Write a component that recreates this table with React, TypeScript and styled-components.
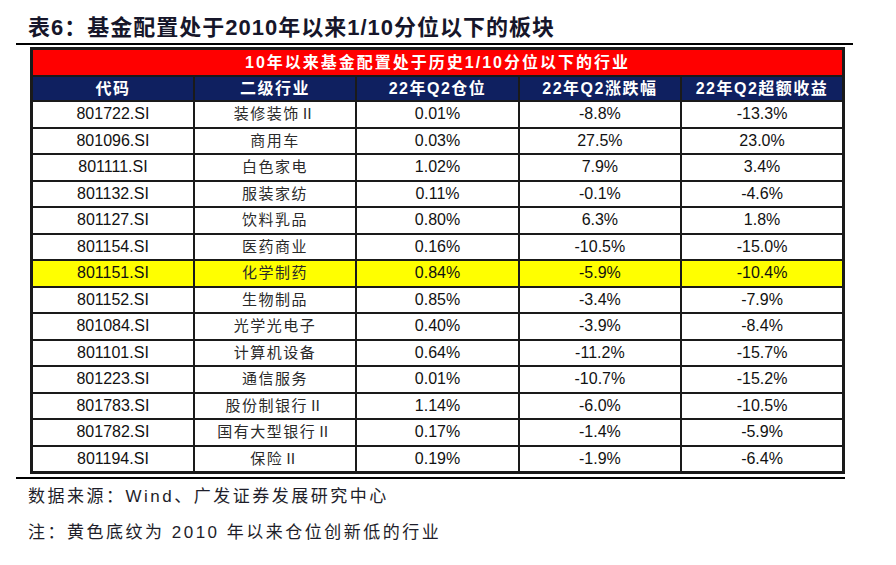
import styled, { createGlobalStyle } from 'styled-components';

type Row = {
  code: string;
  industry: string;
  position: string;
  change: string;
  excess: string;
  lowest?: boolean;
};

const rows: Row[] = [
  { code: '801722.SI', industry: '装修装饰Ⅱ', position: '0.01%', change: '-8.8%', excess: '-13.3%' },
  { code: '801096.SI', industry: '商用车', position: '0.03%', change: '27.5%', excess: '23.0%' },
  { code: '801111.SI', industry: '白色家电', position: '1.02%', change: '7.9%', excess: '3.4%' },
  { code: '801132.SI', industry: '服装家纺', position: '0.11%', change: '-0.1%', excess: '-4.6%' },
  { code: '801127.SI', industry: '饮料乳品', position: '0.80%', change: '6.3%', excess: '1.8%' },
  { code: '801154.SI', industry: '医药商业', position: '0.16%', change: '-10.5%', excess: '-15.0%' },
  { code: '801151.SI', industry: '化学制药', position: '0.84%', change: '-5.9%', excess: '-10.4%', lowest: true },
  { code: '801152.SI', industry: '生物制品', position: '0.85%', change: '-3.4%', excess: '-7.9%' },
  { code: '801084.SI', industry: '光学光电子', position: '0.40%', change: '-3.9%', excess: '-8.4%' },
  { code: '801101.SI', industry: '计算机设备', position: '0.64%', change: '-11.2%', excess: '-15.7%' },
  { code: '801223.SI', industry: '通信服务', position: '0.01%', change: '-10.7%', excess: '-15.2%' },
  { code: '801783.SI', industry: '股份制银行Ⅱ', position: '1.14%', change: '-6.0%', excess: '-10.5%' },
  { code: '801782.SI', industry: '国有大型银行Ⅱ', position: '0.17%', change: '-1.4%', excess: '-5.9%' },
  { code: '801194.SI', industry: '保险Ⅱ', position: '0.19%', change: '-1.9%', excess: '-6.4%' },
];

const headers = ['代码', '二级行业', '22年Q2仓位', '22年Q2涨跌幅', '22年Q2超额收益'];

const App = () => {
  return (
    <>
      <GlobalStyle />
      <Page>
        <TitleBar>
          <Title>表6：基金配置处于2010年以来1/10分位以下的板块</Title>
        </TitleBar>
        <TableArea>
          <Table>
            <colgroup>
              {headers.map((h) => (
                <col key={h} style={{ width: '20%' }} />
              ))}
            </colgroup>
            <thead>
              <tr>
                <Banner colSpan={5}>10年以来基金配置处于历史1/10分位以下的行业</Banner>
              </tr>
              <tr>
                {headers.map((h) => (
                  <HeadCell key={h}>{h}</HeadCell>
                ))}
              </tr>
            </thead>
            <tbody>
              {rows.map((r) => (
                <DataRow key={r.code} $lowest={!!r.lowest}>
                  <Cell>{r.code}</Cell>
                  <NameCell>{r.industry}</NameCell>
                  <Cell>{r.position}</Cell>
                  <Cell>{r.change}</Cell>
                  <Cell>{r.excess}</Cell>
                </DataRow>
              ))}
            </tbody>
          </Table>
        </TableArea>
        <Notes>
          <Note>数据来源：Wind、广发证券发展研究中心</Note>
          <Note>注：黄色底纹为 2010 年以来仓位创新低的行业</Note>
        </Notes>
      </Page>
    </>
  );
};

const GlobalStyle = createGlobalStyle`
  body {
    margin: 0;
    background: #ffffff;
    font-family: "Liberation Sans", "Noto Sans CJK SC", sans-serif;
  }
`;

const Page = styled.div`
  width: 837px;
  padding-left: 16px;
`;

const TitleBar = styled.div`
  height: 45px;
  display: flex;
  align-items: center;
  padding: 12px 0 0 12px;
  box-sizing: border-box;
  border-bottom: 2px solid #000000;
`;

const Title = styled.h1`
  margin: 0;
  font-size: 22px;
  line-height: 26px;
  font-weight: 700;
  letter-spacing: 1px;
  color: #16162a;
`;

const TableArea = styled.div`
  padding: 2px 0 3px 14px;
  width: 815px;
  border-bottom: 2px solid #000000;
`;

const Table = styled.table`
  width: 815px;
  border-collapse: collapse;
  table-layout: fixed;
  border: 3px solid #1a1a1a;
`;

const Banner = styled.th`
  height: 25px;
  padding: 0;
  line-height: 20px;
  background: #ff0000;
  color: #ffffff;
  font-size: 16px;
  font-weight: 700;
  letter-spacing: 2px;
  text-align: center;
  border: 2px solid #1a1a1a;
`;

const HeadCell = styled.th`
  height: 23px;
  padding: 0;
  line-height: 20px;
  background: #0f2060;
  color: #ffffff;
  font-size: 16px;
  font-weight: 700;
  letter-spacing: 1.5px;
  text-align: center;
  border: 2px solid #1a1a1a;
`;

const DataRow = styled.tr<{ $lowest: boolean }>`
  background: ${(p) => (p.$lowest ? '#ffff00' : '#ffffff')};
`;

const Cell = styled.td`
  height: 24.5px;
  padding: 0;
  line-height: 20px;
  font-size: 16px;
  color: #111111;
  text-align: center;
  border: 2px solid #1a1a1a;
`;

const NameCell = styled(Cell)`
  font-size: 15px;
  letter-spacing: 1.5px;
  color: #2a2a2a;
`;

const Notes = styled.div`
  padding-left: 12px;
`;

const Note = styled.p`
  margin: 0;
  height: 36px;
  line-height: 36px;
  font-size: 17px;
  letter-spacing: 2.5px;
  color: #1e1e2a;
`;

export default App;
